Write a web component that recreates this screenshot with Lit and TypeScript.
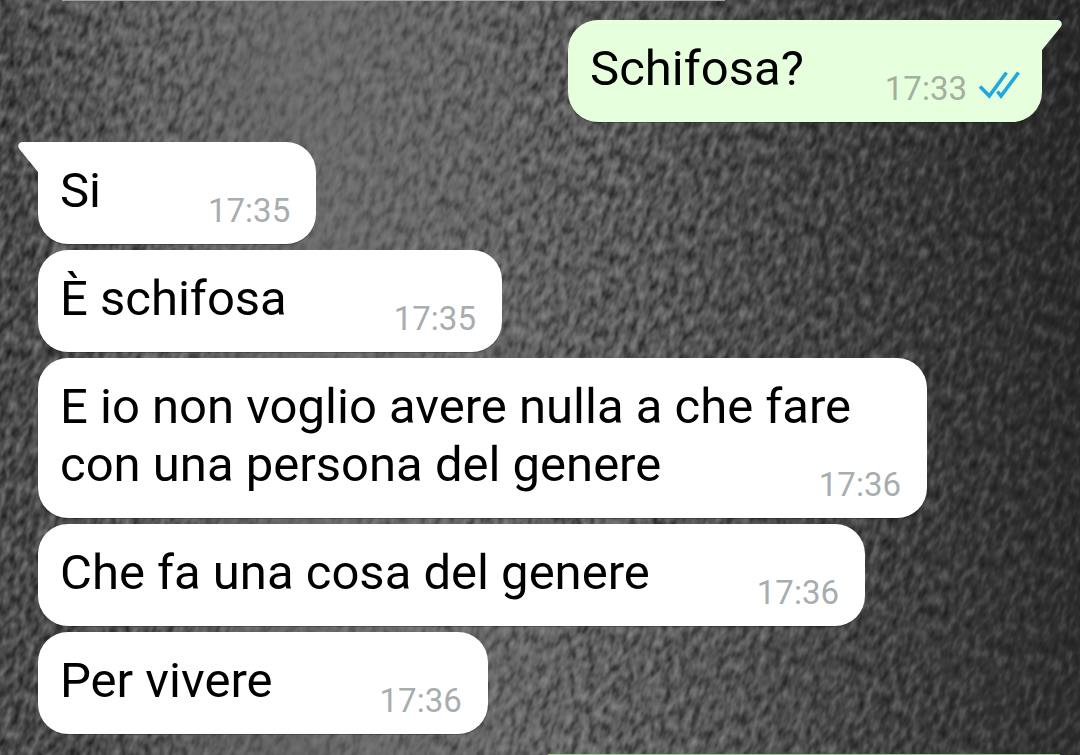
import { LitElement, html, css, svg, nothing } from "lit";
import { customElement, property } from "lit/decorators.js";

interface Message {
  text: string;
  time: string;
  outgoing?: boolean;
  tail?: boolean;
}

const MESSAGES: Message[] = [
  { text: "Schifosa?", time: "17:33", outgoing: true, tail: true },
  { text: "Si", time: "17:35", tail: true },
  { text: "È schifosa", time: "17:35" },
  { text: "E io non voglio avere nulla a che fare con una persona del genere", time: "17:36" },
  { text: "Che fa una cosa del genere", time: "17:36" },
  { text: "Per vivere", time: "17:36" },
];

@customElement("chat-wallpaper")
export class ChatWallpaper extends LitElement {
  static styles = css`
    :host {
      display: block;
      overflow: hidden;
    }
    .texture {
      display: block;
      width: 100%;
      height: 100%;
    }
  `;

  render() {
    return html`
      <svg class="texture" aria-hidden="true">
        ${svg`
          <defs>
            <linearGradient id="base" x1="0" y1="0.08" x2="1" y2="0">
              <stop offset="0" stop-color="#4a4a4a" />
              <stop offset="0.12" stop-color="#5e5e5e" />
              <stop offset="0.28" stop-color="#6b6b6b" />
              <stop offset="0.42" stop-color="#666666" />
              <stop offset="0.58" stop-color="#585858" />
              <stop offset="0.75" stop-color="#414141" />
              <stop offset="0.88" stop-color="#333333" />
              <stop offset="1" stop-color="#282828" />
            </linearGradient>
            <linearGradient id="depth" x1="0" x2="1">
              <stop offset="0" stop-color="#fff" />
              <stop offset="0.14" stop-color="#ccc" />
              <stop offset="0.27" stop-color="#555" />
              <stop offset="0.38" stop-color="#888" />
              <stop offset="0.55" stop-color="#eee" />
              <stop offset="0.8" stop-color="#ccc" />
              <stop offset="1" stop-color="#888" />
            </linearGradient>
            <mask id="relief"><rect width="100%" height="100%" fill="url(#depth)" /></mask>
            <filter id="pits" x="0" y="0" width="100%" height="100%" color-interpolation-filters="sRGB">
              <feTurbulence type="fractalNoise" baseFrequency="0.15 0.08" numOctaves="2" seed="7" />
              <feColorMatrix values="0 0 0 0 0  0 0 0 0 0  0 0 0 0 0  0 0 0 2.6 -1.3" />
            </filter>
            <filter id="ridges" x="0" y="0" width="100%" height="100%" color-interpolation-filters="sRGB">
              <feTurbulence type="fractalNoise" baseFrequency="0.15 0.08" numOctaves="2" seed="7" />
              <feColorMatrix values="0 0 0 0 1  0 0 0 0 1  0 0 0 0 1  0 0 0 -1 0.5" />
            </filter>
          </defs>
          <rect width="100%" height="100%" fill="url(#base)" />
          <g mask="url(#relief)">
            <g transform="rotate(18)">
              <rect y="-50%" width="150%" height="200%" filter="url(#pits)" opacity="0.65" />
              <rect y="-50%" width="150%" height="200%" filter="url(#ridges)" opacity="0.7" />
            </g>
          </g>
        `}
      </svg>
    `;
  }
}

@customElement("chat-bubble")
export class ChatBubble extends LitElement {
  @property({ attribute: false }) message!: Message;

  static styles = css`
    :host {
      display: flex;
    }
    .bubble {
      position: relative;
      display: flow-root;
      box-sizing: border-box;
      max-width: calc(100% - 115px);
      padding: 20px 26px 14px 22px;
      border-radius: 30px;
      background: #fff;
      box-shadow: 0 1px 0 rgba(0, 0, 0, 0.25);
      color: #000;
      font-size: 49px;
      line-height: 58px;
    }
    .outgoing {
      margin-left: auto;
      padding-right: 22px;
      background: #e6ffdc;
    }
    .tail-left {
      border-top-left-radius: 0;
    }
    .tail-right {
      border-top-right-radius: 0;
    }
    .meta {
      float: right;
      display: flex;
      gap: 11px;
      margin: 30px 0 0 107px;
      color: #a8adaf;
      font-size: 33px;
      line-height: 38px;
    }
    .outgoing .meta {
      margin-left: 81px;
      color: #a3b09f;
    }
    .ticks {
      display: block;
      width: 42px;
      height: 30px;
    }
    .tail {
      position: absolute;
      top: 0;
      width: 20px;
      height: 30px;
      fill: #fff;
    }
    .tail-left .tail {
      right: 100%;
    }
    .tail-right .tail {
      left: 100%;
      fill: #e6ffdc;
    }
  `;

  render() {
    const { text, time, outgoing, tail } = this.message;
    const side = tail ? (outgoing ? "tail-right" : "tail-left") : "";
    return html`
      <div class="bubble ${outgoing ? "outgoing" : ""} ${side}">
        ${tail
          ? html`<svg class="tail" viewBox="0 0 20 30" aria-hidden="true">
              ${outgoing
                ? svg`<path d="M0 0H15.5C19.5 0 21 4 18.7 7L0 30Z" />`
                : svg`<path d="M20 0H4.5C.5 0-1 4 1.3 7L20 30Z" />`}
            </svg>`
          : nothing}
        <span>${text}</span>
        <span class="meta">
          <time>${time}</time>
          ${outgoing
            ? html`<svg class="ticks" viewBox="0 0 42 30" fill="none" stroke="#1fa8e0" stroke-width="3.6" role="img" aria-label="Letto">
                <path d="M2 16.5L11.3 26L28.5 2.5M19.5 21.5L23 26L40.5 2.5" />
              </svg>`
            : nothing}
        </span>
      </div>
    `;
  }
}

@customElement("app-root")
export class AppRoot extends LitElement {
  static styles = css`
    :host {
      display: block;
      position: relative;
      height: 100vh;
      overflow: hidden;
      background: #505050;
      font-family: Roboto, "Liberation Sans", sans-serif;
    }
    .wallpaper {
      position: absolute;
      inset: 0;
    }
    .chat {
      position: relative;
      display: flex;
      flex-direction: column;
      gap: 6px;
      padding: 0 38px;
    }
    .turn {
      margin-top: 14px;
    }
    .turn:first-of-type {
      margin-top: 13px;
    }
    .edge {
      height: 1px;
    }
    .earlier {
      width: 66%;
      margin-left: 24px;
      background: #9ba09b;
    }
    .later {
      width: 51%;
      margin: 14px -18px 0 auto;
      background: #a3bf90;
    }
  `;

  render() {
    return html`
      <chat-wallpaper class="wallpaper"></chat-wallpaper>
      <main class="chat">
        <div class="edge earlier"></div>
        ${MESSAGES.map(
          (message) => html`<chat-bubble class=${message.tail ? "turn" : ""} .message=${message}></chat-bubble>`
        )}
        <div class="edge later"></div>
      </main>
    `;
  }
}
